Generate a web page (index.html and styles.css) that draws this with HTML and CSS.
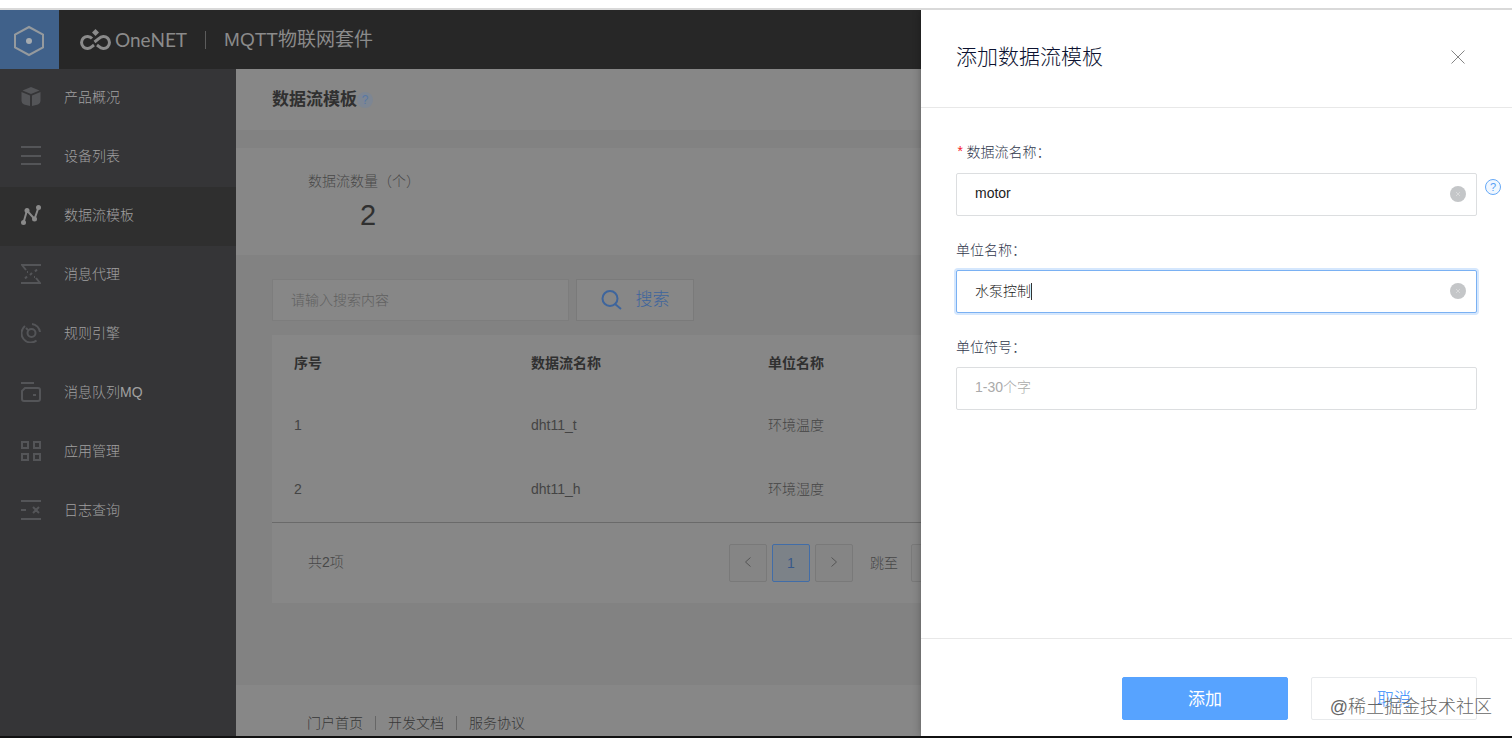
FILE: index.html
```html
<!DOCTYPE html>
<html lang="zh-CN">
<head>
    <meta charset="UTF-8">
    <meta name="viewport" content="width=device-width, initial-scale=1.0">
    <title>数据流模板 - OneNET</title>
    <link rel="stylesheet" href="styles.css">
</head>
<body>
    <!-- 顶部栏 -->
    <header class="topbar">
        <a class="home" href="#" aria-label="首页">
            <svg width="32" height="32" viewBox="0 0 32 32" fill="none" stroke="#959a9e" stroke-width="2">
                <path d="M16 2L30 9.500v13L16 30 2 22.500v-13z"/>
                <circle cx="16" cy="16" r="3" fill="#a5abb0" stroke="none"/>
            </svg>
        </a>
        <a class="logo" href="#">
            <svg width="33" height="24" viewBox="0 0 33 24" fill="none" stroke="#8b8b8b" stroke-width="3">
                <path d="M13 10.500A6 6 0 1 0 13 18.500l2-1.500M18 17l2 1.500A6 6 0 1 0 20 10.500L15.500 14"/>
                <path d="M16.500 1l3.500 3.500L16.500 8 13 4.500z" fill="#8b8b8b" stroke="none"/>
            </svg>
            <span>OneNET</span>
        </a>
        <span class="topbar-line"></span>
        <span class="product">MQTT物联网套件</span>
    </header>

    <div class="layout">
        <!-- 左侧菜单 -->
        <nav class="sidebar">
            <a href="#">
                <svg viewBox="0 0 20 20" fill="currentColor"><path d="M10 0l8.500 3.500L10 7 1.500 3.500zM.500 5L9 8.500V19L3 17.500Q.500 16.500.500 14zM19.500 5L11 8.500V19l6-1.500q2.500-1 2.500-3.500z"/></svg>
                产品概况
            </a>
            <a href="#">
                <svg viewBox="0 0 20 20" fill="none" stroke="currentColor" stroke-width="2"><path d="M0 1h20M0 10h20M0 18h20"/></svg>
                设备列表
            </a>
            <a class="active" href="#">
                <svg viewBox="0 0 20 20" fill="none" stroke="currentColor" stroke-width="2"><path d="M2.500 17.500L6 5.500l7.500 8.500 4-11.500"/><g fill="currentColor" stroke="none"><circle cx="2.500" cy="17.500" r="2.500"/><circle cx="6" cy="5.500" r="2.500"/><circle cx="13.500" cy="14" r="2.500"/><circle cx="17.500" cy="2.500" r="2.500"/></g></svg>
                数据流模板
            </a>
            <a href="#">
                <svg viewBox="0 0 20 20" fill="none" stroke="currentColor" stroke-width="2"><path d="M20 1H1l4 5M0 19h19l-4-5"/><path d="M4 14.500l2-2M9 11l2-2M14 7.500l2-2M6 8h1M13 13h1"/></svg>
                消息代理
            </a>
            <a href="#">
                <svg viewBox="0 0 20 20" fill="none" stroke="currentColor" stroke-width="2"><path d="M4 3A9 9 0 1 0 15.500 17.500M11 1a9 9 0 0 1 8 8M5 5l2 2"/><circle cx="10.500" cy="10" r="4"/></svg>
                规则引擎
            </a>
            <a href="#">
                <svg viewBox="0 0 20 20" fill="none" stroke="currentColor" stroke-width="2"><path d="M0 1h13"/><path d="M4 6h13q2 0 2 2v9q0 2-2 2H3q-2 0-2-2V9z"/><path d="M12 13h3"/></svg>
                消息队列MQ
            </a>
            <a href="#">
                <svg viewBox="0 0 20 20" fill="none" stroke="currentColor" stroke-width="2"><path d="M1 1h6v6H1zM13 1h6v6h-6zM1 13h6v6H1zM13 13h6v6h-6z"/></svg>
                应用管理
            </a>
            <a href="#">
                <svg viewBox="0 0 20 20" fill="none" stroke="currentColor" stroke-width="2"><path d="M0 1h20M0 19h20M0 10h5M12 7l6 6M18 7l-6 6"/></svg>
                日志查询
            </a>
        </nav>

        <!-- 主要内容 -->
        <main class="main">
            <div class="page-title">
                <h1>数据流模板</h1>
                <span class="title-help">?</span>
            </div>

            <section class="stats">
                <div class="stat">
                    <span>数据流数量（个）</span>
                    <strong>2</strong>
                </div>
            </section>

            <section class="content">
                <form class="search">
                    <input type="text" placeholder="请输入搜索内容" aria-label="搜索内容">
                    <button type="button">
                        <svg width="22" height="22" viewBox="0 0 22 22" fill="none" stroke="currentColor" stroke-width="2"><circle cx="9" cy="9.500" r="7.500"/><path d="M14 15l6 5"/></svg>
                        搜索
                    </button>
                </form>

                <div class="card">
                    <table>
                        <thead>
                            <tr><th>序号</th><th>数据流名称</th><th>单位名称</th><th></th></tr>
                        </thead>
                        <tbody>
                            <tr><td>1</td><td>dht11_t</td><td>环境温度</td><td></td></tr>
                            <tr><td>2</td><td>dht11_h</td><td>环境湿度</td><td></td></tr>
                        </tbody>
                    </table>
                    <div class="table-foot">
                        <span class="total">共2项</span>
                        <div class="pager">
                            <button type="button" aria-label="上一页"><svg width="8" height="12" viewBox="0 0 8 12" fill="none" stroke="currentColor"><path d="M6.500 1.500L1.500 6l5 4.500"/></svg></button>
                            <button type="button" class="current">1</button>
                            <button type="button" aria-label="下一页"><svg width="8" height="12" viewBox="0 0 8 12" fill="none" stroke="currentColor"><path d="M1.500 1.500l5 4.500-5 4.500"/></svg></button>
                            <label for="jump">跳至</label>
                            <input type="text" id="jump">
                        </div>
                    </div>
                </div>
            </section>

            <footer class="footer">
                <a href="#">门户首页</a>
                <a href="#">开发文档</a>
                <a href="#">服务协议</a>
            </footer>
        </main>
    </div>

    <!-- 添加数据流模板抽屉 -->
    <aside class="drawer">
        <div class="drawer-head">
            <h2>添加数据流模板</h2>
            <button type="button" class="close" aria-label="关闭">
                <svg width="16" height="16" viewBox="0 0 16 16" fill="none" stroke="#858585"><path d="M1.500 1.500l13 13M14.500 1.500l-13 13"/></svg>
            </button>
        </div>

        <form class="drawer-form">
            <div class="field">
                <label for="streamName"><span class="required">*</span>数据流名称：</label>
                <div class="control">
                    <input type="text" id="streamName" value="motor">
                    <button type="button" class="clear" aria-label="清空"><svg width="16" height="16" viewBox="0 0 16 16"><circle cx="8" cy="8" r="8" fill="#c4c6c8"/><path d="M6 6l4 4M10 6l-4 4" stroke="#d8d9da"/></svg></button>
                    <span class="field-help">?</span>
                </div>
            </div>
            <div class="field">
                <label for="unitName">单位名称：</label>
                <div class="control focused">
                    <input type="text" id="unitName" value="水泵控制">
                    <span class="caret"></span>
                    <button type="button" class="clear" aria-label="清空"><svg width="16" height="16" viewBox="0 0 16 16"><circle cx="8" cy="8" r="8" fill="#c4c6c8"/><path d="M6 6l4 4M10 6l-4 4" stroke="#d8d9da"/></svg></button>
                </div>
            </div>
            <div class="field">
                <label for="unitSymbol">单位符号：</label>
                <div class="control">
                    <input type="text" id="unitSymbol" placeholder="1-30个字">
                </div>
            </div>
        </form>

        <div class="drawer-foot">
            <button type="button" class="btn primary">添加</button>
            <button type="button" class="btn">取消</button>
        </div>
    </aside>

    <div class="watermark">@稀土掘金技术社区</div>
</body>
</html>
```
FILE: styles.css
```css
/* 全局 */
* {
    box-sizing: border-box;
}

body {
    margin: 0;
    padding-top: 8px;
    height: 100vh;
    display: flex;
    flex-direction: column;
    position: relative;
    overflow: hidden;
    font-family: "Liberation Sans", "Noto Sans CJK SC", sans-serif;
    font-size: 14px;
    font-weight: 300;
    line-height: 20px;
    background-color: #fff;
    border-bottom: 2px solid #111;
}

a {
    color: inherit;
    text-decoration: none;
}

button,
input {
    font: inherit;
    outline: none;
}

button {
    cursor: pointer;
}

h1,
h2 {
    margin: 0;
}

/* 顶部栏 */
.topbar {
    display: flex;
    align-items: center;
    flex: none;
    height: 61px;
    border-top: 2px solid #d9d9d9;
    background-color: #272727;
    color: #8b8b8b;
}

.home {
    display: flex;
    align-items: center;
    justify-content: center;
    width: 59px;
    height: 59px;
    padding: 2px 2px 0 0;
    background-color: #40618a;
}

.logo {
    display: flex;
    align-items: center;
    gap: 3px;
    margin-left: 20px;
    font-family: Lato, sans-serif;
    font-size: 19px;
    font-weight: 400;
}

.topbar-line {
    width: 1px;
    height: 18px;
    margin: 0 18px;
    background-color: #5c5c5c;
}

.product {
    font-size: 19px;
    font-weight: 400;
}

/* 布局 */
.layout {
    display: flex;
    flex: 1;
    min-height: 0;
}

.sidebar {
    flex: none;
    width: 236px;
    background-color: #353537;
}

.sidebar a {
    display: flex;
    align-items: center;
    gap: 23px;
    height: 59px;
    padding: 0 0 4px 21px;
    color: #a0a0a0;
}

.sidebar svg {
    width: 20px;
    height: 20px;
    color: #545558;
}

.sidebar .active {
    background-color: #2f2f2f;
}

.sidebar .active svg {
    color: #8a8a8a;
}

.main {
    flex: 1;
    min-width: 0;
    display: flex;
    flex-direction: column;
    background-color: #828282;
    color: #484848;
}

.page-title {
    display: flex;
    align-items: center;
    height: 61px;
    padding: 0 36px;
    background-color: #878787;
}

.page-title h1 {
    font-size: 17px;
    font-weight: 700;
    color: #303030;
}

.title-help {
    width: 16px;
    height: 16px;
    border-radius: 50%;
    background-color: #7d8693;
    color: #5878a4;
    font-size: 12px;
    line-height: 16px;
    text-align: center;
}

/* 统计 */
.stats {
    display: flex;
    height: 107px;
    margin-top: 18px;
    padding: 23px 72px;
    background-color: #878787;
}

.stat {
    display: flex;
    flex-direction: column;
    align-items: center;
    gap: 8px;
}

.stat strong {
    padding-left: 8px;
    font-size: 29px;
    font-weight: 400;
    line-height: 32px;
    color: #303030;
}

/* 搜索与表格 */
.content {
    flex: 1;
    padding: 24px 36px 0;
}

.search {
    display: flex;
    gap: 7px;
}

.search input {
    width: 297px;
    height: 42px;
    padding: 0 18px;
    border: 1px solid #7d7d7d;
    background-color: #878787;
}

.search input::placeholder {
    color: #606060;
}

.search button {
    display: flex;
    align-items: center;
    justify-content: center;
    gap: 13px;
    width: 118px;
    height: 42px;
    padding: 0 6px;
    border: 1px solid #7a7a7a;
    background-color: #878787;
    color: #3e659d;
    font-size: 17px;
}

.card {
    margin-top: 14px;
    background-color: #878787;
}

table {
    width: 100%;
    table-layout: fixed;
    border-collapse: collapse;
    border-bottom: 1px solid #6a6a6a;
}

th,
td {
    width: 237px;
    height: 65px;
    padding: 0 22px;
    text-align: left;
    color: #444;
}

th:last-child {
    width: auto;
}

th {
    height: 57px;
    padding-bottom: 2px;
    font-weight: 700;
    color: #303030;
}

.table-foot {
    display: flex;
    align-items: center;
    height: 80px;
    padding-left: 36px;
}

.total {
    width: 421px;
    padding-bottom: 2px;
}

.pager {
    display: flex;
    align-items: center;
    gap: 5px;
}

.pager button,
.pager input {
    width: 38px;
    height: 38px;
    padding: 0;
    border: 1px solid #797979;
    border-radius: 2px;
    background-color: #858585;
    color: #555;
}

.pager .current {
    border-color: #416da8;
    background-color: #7c8288;
    color: #38598a;
}

.pager label {
    margin: 0 8px 0 12px;
}

/* 页脚 */
.footer {
    display: flex;
    align-items: center;
    height: 51px;
    padding: 24px 71px 0;
    background-color: #878787;
    color: #383838;
}

.footer a + a {
    margin-left: 12px;
    padding-left: 12px;
    border-left: 1px solid #666;
    line-height: 14px;
}

/* 抽屉 */
.drawer {
    position: absolute;
    top: 10px;
    right: 0;
    bottom: 0;
    display: flex;
    flex-direction: column;
    width: 591px;
    background-color: #fff;
    box-shadow: 0 0 8px rgba(0, 0, 0, 0.3);
    clip-path: inset(0 0 0 -12px);
}

.drawer-head {
    display: flex;
    align-items: center;
    justify-content: space-between;
    height: 98px;
    padding: 0 46px 4px 35px;
    border-bottom: 1px solid #e8e8e8;
}

.drawer-head h2 {
    font-size: 21px;
    font-weight: 300;
    line-height: 28px;
    color: #0c1230;
}

.close {
    display: flex;
    padding: 0;
    border: none;
    background: none;
}

.drawer-form {
    flex: 1;
    padding: 34px 35px 0;
}

.field {
    display: flex;
    flex-direction: column;
    gap: 10px;
    margin-bottom: 24px;
}

.field label {
    color: #30374c;
}

.required {
    margin-right: 2px;
    font-family: "Liberation Mono", monospace;
    color: #f5222d;
}

.control {
    position: relative;
}

.control input {
    display: block;
    width: 100%;
    height: 43px;
    padding: 0 48px 3px 18px;
    border: 1px solid #dcdee0;
    border-radius: 2px;
    color: #222;
}

.control input::placeholder {
    color: #aaa;
}

.control input:focus,
.focused input {
    border-color: #7ab1f3;
    box-shadow: 0 0 0 2px #d5e7fd;
}

/* 输入光标 */
.caret {
    position: absolute;
    top: 13px;
    left: 75px;
    width: 1px;
    height: 17px;
    background-color: #333;
}

.clear {
    position: absolute;
    top: 13px;
    right: 11px;
    display: flex;
    padding: 0;
    border: none;
    background: none;
}

.field-help {
    position: absolute;
    top: 6px;
    right: -24px;
    width: 16px;
    height: 16px;
    border: 1px solid #66a9f7;
    border-radius: 50%;
    background-color: #f0f7ff;
    color: #559ff5;
    font-size: 11px;
    line-height: 14px;
    text-align: center;
}

.drawer-foot {
    display: flex;
    justify-content: flex-end;
    gap: 23px;
    padding: 38px 35px 16px;
    border-top: 1px solid #e8e8e8;
}

.btn {
    width: 166px;
    height: 43px;
    padding: 2px 0 0;
    border: 1px solid #e8eaec;
    border-radius: 2px;
    background-color: #fff;
    color: #2f8afa;
    font-size: 17px;
}

.btn.primary {
    border-color: #57a3ff;
    background-color: #57a3ff;
    color: #fff;
    font-weight: 400;
}

/* 水印 */
.watermark {
    position: absolute;
    right: 20px;
    bottom: 19px;
    font-size: 18px;
    color: #666;
    text-shadow: 1px 1px 0 #fff;
    pointer-events: none;
}
```
